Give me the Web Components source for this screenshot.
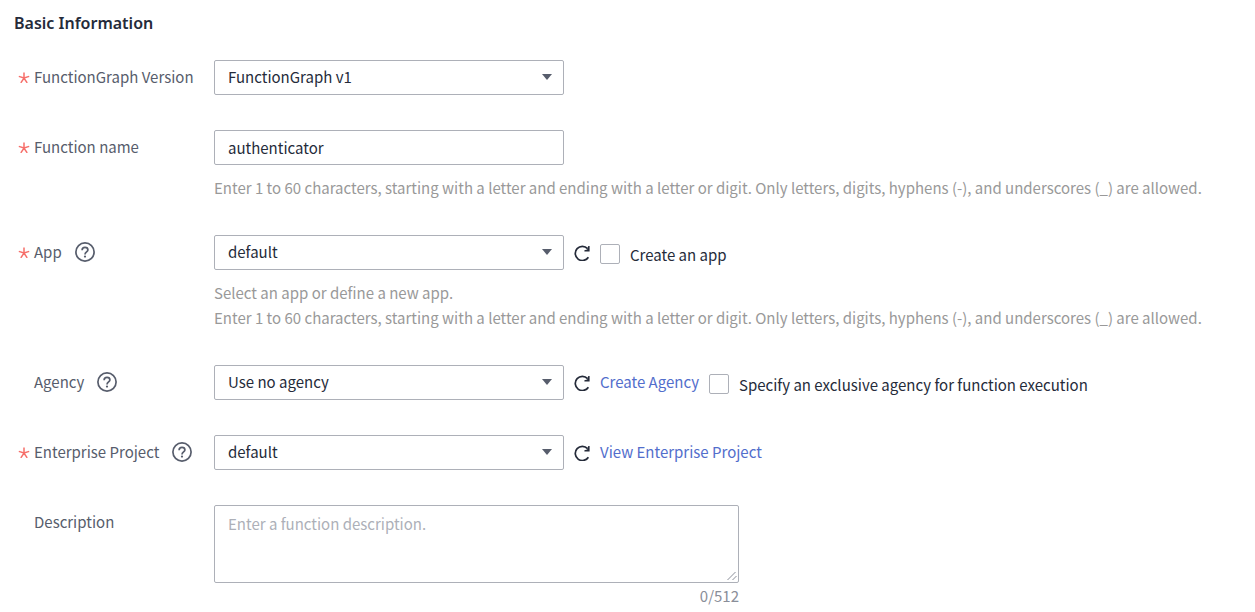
<!DOCTYPE html>
<html lang="en">
<head>
<meta charset="utf-8">
<meta name="viewport" content="width=device-width, initial-scale=1">
<title>Basic Information</title>
<style>
  body {
    margin: 0;
    background: #fff;
    color: #252b3a;
    font: 15px/25px "Noto Sans CJK SC", "Noto Sans", sans-serif;
    --label: #575d6c;
    --hint: #999;
    --line: #adb0b8;
    --link: #526ecc;
    --required: #f66f6a;
  }
</style>
</head>
<body>
<form-section heading="Basic Information">
  <select-field label="FunctionGraph Version" required value="FunctionGraph v1"></select-field>
  <text-field label="Function name" required value="authenticator">
    <span slot="hint">Enter 1 to 60 characters, starting with a letter and ending with a letter or digit. Only letters, digits, hyphens (-), and underscores (_) are allowed.</span>
  </text-field>
  <select-field label="App" required help value="default">
    <refresh-button></refresh-button>
    <check-option>Create an app</check-option>
    <span slot="hint">Select an app or define a new app.<br>Enter 1 to 60 characters, starting with a letter and ending with a letter or digit. Only letters, digits, hyphens (-), and underscores (_) are allowed.</span>
  </select-field>
  <select-field label="Agency" help value="Use no agency">
    <refresh-button></refresh-button>
    <text-link>Create Agency</text-link>
    <check-option>Specify an exclusive agency for function execution</check-option>
  </select-field>
  <select-field label="Enterprise Project" required help value="default">
    <refresh-button></refresh-button>
    <text-link>View Enterprise Project</text-link>
  </select-field>
  <area-field label="Description" placeholder="Enter a function description." limit="512"></area-field>
</form-section>

<script>
class FormSection extends HTMLElement {
  connectedCallback() {
    this.attachShadow({ mode: "open" }).innerHTML = `
      <style>
        :host { display: block; padding: 11px 15px 0 14px; }
        h2 { margin: 0 0 24px; font-family: "Noto Sans", sans-serif; font-size: 16px; line-height: 25px; font-weight: 600; }
        form { display: flex; flex-direction: column; gap: 35px; }
      </style>
      <h2></h2>
      <form><slot></slot></form>`;
    this.shadowRoot.querySelector("h2").textContent = this.getAttribute("heading");
  }
}

class HelpButton extends HTMLElement {
  connectedCallback() {
    this.attachShadow({ mode: "open" }).innerHTML = `
      <style>
        :host { display: block; height: 20px; }
        button { display: block; padding: 0; border: 0; background: none; color: var(--label); cursor: pointer; }
        svg { display: block; }
      </style>
      <button type="button" aria-label="Help">
        <svg width="20" height="20" viewBox="0 0 20 20" fill="none" stroke="currentColor" stroke-width="1.7">
          <circle cx="10" cy="10" r="9.1"/>
          <path d="M7.1 8.2C7.1 6.4 8.3 5.4 10 5.4S12.9 6.4 12.9 7.9C12.9 9.8 10 10 10 12.4"/>
          <circle cx="10" cy="14.6" r="1.1" fill="currentColor" stroke="none"/>
        </svg>
      </button>`;
  }
}

class RefreshButton extends HTMLElement {
  connectedCallback() {
    this.attachShadow({ mode: "open" }).innerHTML = `
      <style>
        :host { display: flex; align-items: center; height: 35px; }
        button { display: block; padding: 0; border: 0; background: none; color: #252b3a; cursor: pointer; }
        svg { display: block; }
      </style>
      <button type="button" aria-label="Refresh">
        <svg width="16" height="16" viewBox="0 0 16 16">
          <path d="M14.4 12.2A7.1 7.1 0 1 1 13.6 3.600" fill="none" stroke="currentColor" stroke-width="1.7"/>
          <path d="M15.6 1V6.400H10.400V5.300L13.200 4.400L14.300 1Z" fill="currentColor"/>
        </svg>
      </button>`;
  }
}

class CheckOption extends HTMLElement {
  connectedCallback() {
    this.attachShadow({ mode: "open" }).innerHTML = `
      <style>
        :host { display: block; padding-top: 3px; }
        label { display: flex; align-items: center; gap: 10px; min-height: 32px; }
        input { appearance: none; flex: none; box-sizing: border-box; width: 20px; height: 20px; margin: 0;
                border: 1px solid var(--line); border-radius: 2px; background: #fff; }
        input:checked { background: var(--link); }
      </style>
      <label><input type="checkbox"><span><slot></slot></span></label>`;
  }
}

class TextLink extends HTMLElement {
  connectedCallback() {
    this.attachShadow({ mode: "open" }).innerHTML = `
      <style>
        :host { display: flex; align-items: center; height: 33px; }
        a { color: var(--link); text-decoration: none; }
        a:hover { text-decoration: underline; }
      </style>
      <a href="#"><slot></slot></a>`;
  }
}

class FieldBase extends HTMLElement {
  connectedCallback() {
    const flag = name => this.hasAttribute(name);
    this.attachShadow({ mode: "open" }).innerHTML = `
      <style>
        :host { display: grid; grid-template-columns: 200px minmax(0, 1fr); }
        .caption { display: flex; align-items: center; height: 33px; color: var(--label); }
        .star { flex: none; width: 12px; height: 12px; padding: 0 4px; }
        label { margin-right: 13px; white-space: nowrap; }
        .line { display: flex; flex-wrap: wrap; column-gap: 10px; }
        .box { display: grid; width: 350px; max-width: 100%; }
        input, select, textarea {
          appearance: none; box-sizing: border-box; width: 100%; height: 35px; margin: 0; padding: 0 13px;
          border: 1px solid var(--line); border-radius: 2px; background: #fff; color: inherit; font: inherit; outline: 0;
        }
        select { padding-bottom: 2px; }
        .box > * { grid-area: 1 / 1; }
        .arrow { align-self: center; justify-self: end; margin: 0 12px 2px 0; pointer-events: none; }
        ::slotted([slot="hint"]) { display: block; padding-top: 10px; color: var(--hint); }
        ${this.extraStyle()}
      </style>
      <div class="caption">
        <svg class="star" viewBox="0 0 12 12" fill="none" stroke="var(--required)" stroke-width="1.5">
          ${flag("required") ? '<path d="M6 1.6V7M.8 5.4L6 7L11.2 5.4M2.8 11.9L6 7L9.2 11.9"/>' : ""}
        </svg>
        <label for="control"></label>
        ${flag("help") ? "<help-button></help-button>" : ""}
      </div>
      <div>
        <div class="line">${this.control()}<slot></slot></div>
        <slot name="hint"></slot>
      </div>`;
    this.shadowRoot.querySelector("label").textContent = this.getAttribute("label");
  }
  extraStyle() { return ""; }
}

class SelectField extends FieldBase {
  control() {
    return `<div class="box">
      <select id="control"><option>${this.getAttribute("value")}</option></select>
      <svg class="arrow" width="10" height="6" viewBox="0 0 10 6"><path d="M0 0H10L5 6Z" fill="#575d6c"/></svg>
    </div>`;
  }
}

class TextField extends FieldBase {
  control() {
    return `<div class="box"><input id="control" type="text" value="${this.getAttribute("value")}"></div>`;
  }
}

class AreaField extends FieldBase {
  control() {
    return `<div class="box">
      <textarea id="control" placeholder="${this.getAttribute("placeholder")}" maxlength="${this.getAttribute("limit")}"></textarea>
      <svg class="grip" width="10" height="10" viewBox="0 0 10 10" stroke="#8a8e99" fill="none"><path d="M.5 9L8.5 1M5.5 9L9.5 5"/></svg>
    </div>
    <div class="count">0/${this.getAttribute("limit")}</div>`;
  }
  extraStyle() {
    return `
      .line { flex-direction: column; }
      .box, .count { width: 525px; max-width: 100%; }
      textarea { display: block; height: 78px; padding: 5px 13px; resize: none; }
      textarea::placeholder { color: var(--line); opacity: 1; }
      .grip { align-self: end; justify-self: end; margin: 0 2px 2px 0; pointer-events: none; }
      .count { text-align: right; color: #8a8e99; }`;
  }
}

customElements.define("form-section", FormSection);
customElements.define("help-button", HelpButton);
customElements.define("refresh-button", RefreshButton);
customElements.define("check-option", CheckOption);
customElements.define("text-link", TextLink);
customElements.define("select-field", SelectField);
customElements.define("text-field", TextField);
customElements.define("area-field", AreaField);
</script>
</body>
</html>
